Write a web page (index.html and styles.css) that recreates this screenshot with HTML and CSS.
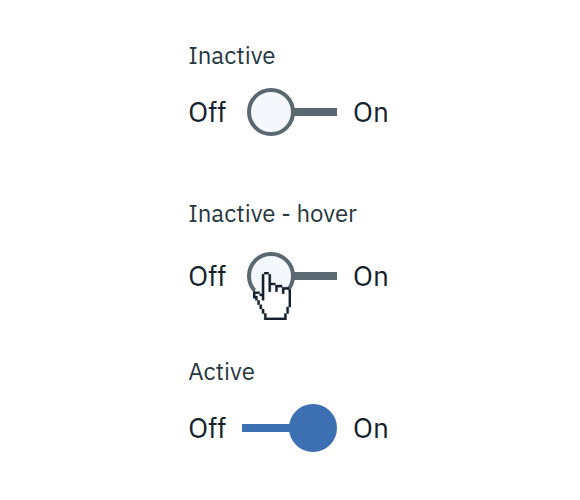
FILE: index.html
```html
<!DOCTYPE html>
<html lang="en">
<head>
<meta charset="utf-8">
<meta name="viewport" content="width=device-width, initial-scale=1">
<title>Toggle states</title>
<link rel="stylesheet" href="styles.css">
</head>
<body>
<main class="states">
  <section class="state">
    <h2 class="state-name" id="inactive">Inactive</h2>
    <label class="toggle">
      <span class="option">Off</span>
      <span class="control"><input class="switch" type="checkbox" role="switch" aria-labelledby="inactive"></span>
      <span class="option">On</span>
    </label>
  </section>
  <section class="state state-hover">
    <h2 class="state-name" id="hover">Inactive - hover</h2>
    <label class="toggle">
      <span class="option">Off</span>
      <span class="control">
        <input class="switch" type="checkbox" role="switch" aria-labelledby="hover">
        <svg class="pointer" viewBox="0 0 17 22" preserveAspectRatio="none" aria-hidden="true">
          <path fill="#fff" d="M5 1h2v5h3v1h3v1h3v8h-1v3h-1v2H6v-2H5v-2H4v-2H3v-2H2v-2H1v-3h2v1h2z"/>
          <path fill="#15222d" stroke="#15222d" stroke-width=".15" d="M5 0h2v1H5zM4 1h1v12H4zM7 1h1v8H7zM8 5h2v1H8zM10 6h1v3h-1zM11 6h2v1h-2zM13 7h1v3h-1zM14 7h2v1h-2zM16 8h1v8h-1zM15 16h1v3h-1zM14 19h1v3h-1zM6 21h8v1H6zM0 9h3v1H0zM3 10h1v1H3zM0 10h1v2H0zM1 11h1v2H1zM2 13h1v2H2zM3 15h1v2H3zM4 17h1v2H4zM5 19h1v3H5z"/>
        </svg>
      </span>
      <span class="option">On</span>
    </label>
  </section>
  <section class="state">
    <h2 class="state-name" id="active">Active</h2>
    <label class="toggle">
      <span class="option">Off</span>
      <span class="control"><input class="switch" type="checkbox" role="switch" aria-labelledby="active" checked></span>
      <span class="option">On</span>
    </label>
  </section>
</main>
</body>
</html>
```
FILE: styles.css
```css
*,
*::before,
*::after {
  box-sizing: border-box;
}

body {
  margin: 0;
  background: #fff;
  color: #15222d;
  font-family: "IBM Plex Sans", Roboto, sans-serif;
}

.states {
  display: grid;
  justify-content: center;
  gap: 62px;
  padding: 40px 3px 48px 0;
}

.state {
  display: grid;
  gap: 18px;
}

.state-hover {
  gap: 24px;
  margin-bottom: -6px;
}

.state-name {
  margin: 0;
  color: #273840;
  font-size: 24px;
  font-weight: 400;
  line-height: 30px;
}

.toggle {
  display: flex;
  align-items: center;
  gap: 16px;
  font-size: 28px;
  line-height: 48px;
}

.control {
  position: relative;
  display: flex;
}

.switch {
  appearance: none;
  display: flex;
  align-items: center;
  width: 95px;
  height: 48px;
  margin: 0;
  padding-left: 5px;
  color: #5a6872;
}

.switch::before {
  content: "";
  width: 48px;
  height: 48px;
  border: 4px solid;
  border-radius: 50%;
  background: #f4f7fb;
}

.switch::after {
  content: "";
  flex: 1;
  height: 8px;
  margin-left: -2px;
  background: currentColor;
}

.switch:checked {
  flex-direction: row-reverse;
  padding: 0;
  color: #3d70b2;
}

.switch:checked::before {
  background: currentColor;
}

.switch:checked::after {
  margin: 0 -2px 0 0;
}

.pointer {
  position: absolute;
  top: 20px;
  left: 11px;
  width: 38px;
  height: 48px;
}
```
